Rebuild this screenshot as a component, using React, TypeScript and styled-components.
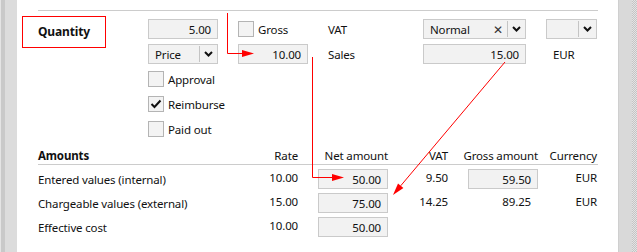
import React from "react";
import styled, { createGlobalStyle } from "styled-components";

const Global = createGlobalStyle`
  html, body { margin: 0; padding: 0; background: #fff; }
  body {
    font-family: "Noto Sans", "Open Sans", sans-serif;
    font-size: 11.5px;
    letter-spacing: -0.15px;
    color: #111;
  }
  * { box-sizing: border-box; }
`;

const Page = styled.div`
  position: relative;
  display: flex;
  width: 637px;
  height: 252px;
  overflow: hidden;
`;

const LeftRail = styled.div`
  width: 17px;
  flex: none;
  background: #dcdcdc;
  border-left: 1px solid #e4e4e4;
  box-shadow: inset 4px 0 0 #c9c9c9;
`;

const Scrollbar = styled.div`
  width: 19px;
  flex: none;
  display: flex;
  background: #d9d9d9;
  border-left: 1px solid #cfcfcf;
`;

const ScrollTrack = styled.div`
  margin-left: auto;
  width: 5px;
  background: repeating-conic-gradient(#c4c4c4 0% 25%, #e4e4e4 0% 50%) 0 0 / 2px 2px;
`;

const Main = styled.div`
  flex: 1;
  padding: 10px 20px 0 21px;
`;

const Rule = styled.div`
  border-top: 1px solid #cccccc;
`;

const TopGrid = styled.div`
  display: grid;
  grid-template-columns: 90px 70px 70px 75px 103px 51px;
  grid-template-rows: repeat(5, 20px);
  column-gap: 20px;
  row-gap: 5px;
  margin-top: 8px;
  align-items: center;
`;

const QuantityLabel = styled.div`
  grid-column: 1;
  grid-row: 1 / span 2;
  align-self: start;
  justify-self: start;
  margin: -3px 0 0 -16px;
  width: 84px;
  height: 32px;
  border: 1px solid #f00;
  padding: 0 0 2px 15px;
  display: flex;
  align-items: center;
  font-weight: 700;
  font-size: 12px;
`;

const Cell = styled.div<{ $col: number; $row: number }>`
  grid-column: ${(p) => p.$col};
  grid-row: ${(p) => p.$row};
`;

const Field = styled.div<{ $width?: number }>`
  height: 20px;
  width: ${(p) => (p.$width ? `${p.$width}px` : "100%")};
  background: #f2f2f2;
  border: 1px solid #cacaca;
  padding: 0 6px;
  display: flex;
  align-items: center;
  justify-content: flex-end;
  justify-self: end;
`;

const Select = styled.div`
  height: 20px;
  width: 100%;
  background: #f2f2f2;
  border: 1px solid #cacaca;
  display: flex;
  align-items: center;
`;

const SelectText = styled.span`
  flex: 1;
  padding-left: 6px;
`;

const ClearX = styled.span`
  width: 18px;
  text-align: center;
  font-size: 12px;
  color: #333;
`;

const SelectButton = styled.span`
  width: 18px;
  height: 16px;
  border-left: 1px solid #c4c4c4;
  display: flex;
  align-items: center;
  justify-content: center;
`;

const CheckRow = styled.label`
  display: flex;
  align-items: center;
  gap: 4px;
  white-space: nowrap;
`;

const Box = styled.span`
  width: 16px;
  height: 16px;
  flex: none;
  background: #f3f3f3;
  border: 1px solid #b4b4b4;
  display: flex;
  align-items: center;
  justify-content: center;
`;

const Text = styled.span<{ $indent?: number }>`
  white-space: nowrap;
  padding-left: ${(p) => p.$indent || 0}px;
`;

const Amounts = styled.div`
  margin-top: 9px;
`;

const columns = "200px 60px 90px 60px 90px 59px";

const TableGrid = styled.div`
  display: grid;
  grid-template-columns: ${columns};
  grid-auto-rows: 20px;
  row-gap: 4px;
  align-items: center;
`;

const HeaderRow = styled.div`
  display: grid;
  grid-template-columns: ${columns};
  height: 17px;
  align-items: center;
  border-bottom: 1px solid #cccccc;
  margin-bottom: 4px;
`;

const Head = styled.div<{ $bold?: boolean; $align?: string }>`
  font-weight: ${(p) => (p.$bold ? 700 : 400)};
  text-align: ${(p) => p.$align || "right"};
  white-space: nowrap;
  margin-top: -2px;
`;

const Num = styled.div<{ $pad?: number }>`
  text-align: right;
  padding-right: ${(p) => p.$pad || 0}px;
  margin-top: -3px;
`;

const Label = styled.div`
  white-space: nowrap;
`;

const Chevron = () => (
  <svg width="9" height="6" viewBox="0 0 9 6">
    <polyline points="1,1 4.5,4.5 8,1" fill="none" stroke="#111" strokeWidth="2" />
  </svg>
);

const Tick = () => (
  <svg width="12" height="10" viewBox="0 0 12 10">
    <polyline points="1.5,5 4.5,8 10.5,1.5" fill="none" stroke="#111" strokeWidth="2" />
  </svg>
);

const Overlay = styled.svg`
  position: absolute;
  left: 0;
  top: 0;
  pointer-events: none;
`;

const Arrows = () => (
  <Overlay width="637" height="252" viewBox="0 0 637 252">
    <g stroke="#f00" strokeWidth="1" fill="none">
      <path d="M227.5 13 V53.5 H243" />
      <path d="M312.5 57 V177.5 H333" />
      <path d="M505 62 L400.7 185.8" />
    </g>
    <g fill="#f00">
      <polygon points="242,50 254,53.5 242,57" />
      <polygon points="332,174 344,177.5 332,181" />
      <polygon points="393,195 403.4,188 398,183.6" />
    </g>
  </Overlay>
);

export default function App() {
  return (
    <>
      <Global />
      <Page>
        <LeftRail />
        <Main>
          <Rule />
          <TopGrid>
            <QuantityLabel>Quantity</QuantityLabel>
            <Cell $col={2} $row={1}>
              <Field>5.00</Field>
            </Cell>
            <Cell $col={2} $row={2}>
              <Select>
                <SelectText>Price</SelectText>
                <SelectButton>
                  <Chevron />
                </SelectButton>
              </Select>
            </Cell>
            <Cell $col={2} $row={3}>
              <CheckRow>
                <Box />
                <Text>Approval</Text>
              </CheckRow>
            </Cell>
            <Cell $col={2} $row={4}>
              <CheckRow>
                <Box>
                  <Tick />
                </Box>
                <Text>Reimburse</Text>
              </CheckRow>
            </Cell>
            <Cell $col={2} $row={5}>
              <CheckRow>
                <Box />
                <Text>Paid out</Text>
              </CheckRow>
            </Cell>
            <Cell $col={3} $row={1}>
              <CheckRow>
                <Box />
                <Text>Gross</Text>
              </CheckRow>
            </Cell>
            <Cell $col={3} $row={2}>
              <Field>10.00</Field>
            </Cell>
            <Cell $col={4} $row={1}>
              <Text>VAT</Text>
            </Cell>
            <Cell $col={4} $row={2}>
              <Text>Sales</Text>
            </Cell>
            <Cell $col={5} $row={1}>
              <Select>
                <SelectText>Normal</SelectText>
                <ClearX>✕</ClearX>
                <SelectButton>
                  <Chevron />
                </SelectButton>
              </Select>
            </Cell>
            <Cell $col={5} $row={2}>
              <Field>15.00</Field>
            </Cell>
            <Cell $col={6} $row={1}>
              <Select>
                <SelectText />
                <SelectButton>
                  <Chevron />
                </SelectButton>
              </Select>
            </Cell>
            <Cell $col={6} $row={2}>
              <Text $indent={7}>EUR</Text>
            </Cell>
          </TopGrid>

          <Amounts>
            <HeaderRow>
              <Head $bold $align="left">Amounts</Head>
              <Head>Rate</Head>
              <Head>Net amount</Head>
              <Head>VAT</Head>
              <Head>Gross amount</Head>
              <Head>Currency</Head>
            </HeaderRow>
            <TableGrid>
              <Label>Entered values (internal)</Label>
              <Num>10.00</Num>
              <Field $width={70}>50.00</Field>
              <Num>9.50</Num>
              <Field $width={70}>59.50</Field>
              <Num>EUR</Num>

              <Label>Chargeable values (external)</Label>
              <Num>15.00</Num>
              <Field $width={70}>75.00</Field>
              <Num>14.25</Num>
              <Num $pad={7}>89.25</Num>
              <Num>EUR</Num>

              <Label>Effective cost</Label>
              <Num>10.00</Num>
              <Field $width={70}>50.00</Field>
              <Num />
              <Num />
              <Num />
            </TableGrid>
          </Amounts>
        </Main>
        <Scrollbar>
          <ScrollTrack />
        </Scrollbar>
        <Arrows />
      </Page>
    </>
  );
}
